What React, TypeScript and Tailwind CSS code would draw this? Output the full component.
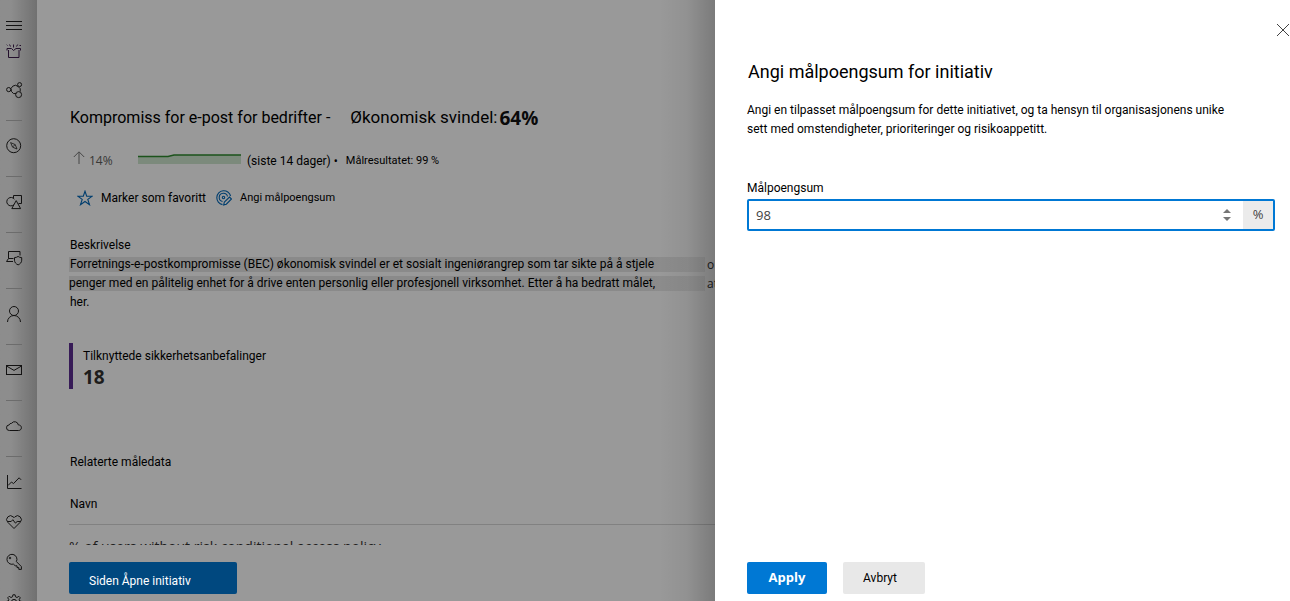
import { useState } from "react";
import type { ReactNode } from "react";

type NavItem = { label: string; icon: ReactNode; divider?: boolean };

const navItems: NavItem[] = [
  {
    label: "Deling",
    icon: (
      <>
        <circle cx="2.7" cy="7.6" r="2.1" />
        <path d="M12.2 4.6A4.2 4.2 0 1 0 10.4 11.6" />
        <path d="M12.2 4.6A4.2 4.2 0 0 1 14.2 9.6" />
        <circle cx="13.6" cy="2.6" r="2" />
        <circle cx="12.6" cy="12.6" r="3" />
      </>
    ),
    divider: true,
  },
  {
    label: "Utforsk",
    icon: (
      <>
        <circle cx="7.7" cy="7.7" r="7" />
        <path d="M4.6 4.6l4.6 2 1.8 4.4-4.4-1.8zM6.8 8.9l2.2-2.2" strokeWidth=".8" />
      </>
    ),
    divider: true,
  },
  {
    label: "Ressurser",
    icon: (
      <>
        <path d="M7.500 4.500v-3h8v8h-3" />
        <path d="M8.400 5.200a4.200 4.200 0 1 0-.6 5.600" />
        <path d="M10.200 6.600l4.400 8H5.800z" />
      </>
    ),
    divider: true,
  },
  {
    label: "Enheter",
    icon: (
      <>
        <path d="M2.500 8.500v-7h11.500v4M2.500 8.500h5M2.500 8.500l-2 3h6.500" />
        <path d="M8.500 7.600c1.500 0 2.600-.4 3.600-1.200 1 .8 2.100 1.200 3.600 1.200v2.600c0 2.200-1.400 3.700-3.600 4.700-2.200-1-3.600-2.500-3.600-4.700z" />
      </>
    ),
    divider: true,
  },
  {
    label: "Brukere",
    icon: (
      <>
        <circle cx="8" cy="5" r="4.500" />
        <path d="M1.500 16a6.500 6.500 0 0 1 13 0" />
      </>
    ),
    divider: true,
  },
  {
    label: "E-post",
    icon: (
      <>
        <rect x=".5" y="3.500" width="15" height="9" />
        <path d="M.8 4.200l7.200 4.200 7.200-4.200" />
      </>
    ),
    divider: true,
  },
  {
    label: "Skyapper",
    icon: (
      <path d="M3.400 12.500a2.800 2.800 0 0 1-.2-5.600 2.300 2.300 0 0 1 2.400-1.600 3.700 3.700 0 0 1 6.700 1.600c1.900 0 3.100 1.200 3.100 2.800s-1.200 2.800-2.800 2.800z" />
    ),
    divider: true,
  },
  {
    label: "Rapporter",
    icon: (
      <>
        <path d="M1.500 1v13.500h14" />
        <path d="M2 11.500l3.500-3.500 2 1.600 5.600-5.800 2 2" />
      </>
    ),
  },
  {
    label: "Tilstand",
    icon: (
      <>
        <path d="M8 14.500L1.800 8.300A3.800 3.800 0 0 1 7.200 2.900l.8.8.8-.8a3.800 3.800 0 0 1 5.400 5.400z" />
        <path d="M1.800 7.500h3.400l1.600-1.800 2.600 3.400 1.800-1.600h3" />
      </>
    ),
  },
  {
    label: "Tillatelser",
    icon: (
      <>
        <path d="M10.400 7.600l5 5v2.800h-2.600v-1.800H11v-1.800H9.200l-1.800-1.700A5 5 0 1 1 10.400 7.600z" />
        <circle cx="4" cy="4" r=".8" />
      </>
    ),
  },
  {
    label: "Innstillinger",
    icon: (
      <>
        <circle cx="8" cy="8" r="2.600" />
        <path d="M6.900.8h2.200l.4 2 1.500.7 1.800-1.200 1.500 1.500-1.100 1.800.6 1.400 2.100.5v2.200l-2.100.4-.6 1.500 1.100 1.800-1.500 1.500-1.800-1.200-1.500.7-.4 2H6.900l-.4-2-1.500-.7-1.800 1.200-1.500-1.500 1.100-1.800-.6-1.500-2-.4V7.500l2-.5.6-1.400-1.100-1.800 1.500-1.500L5 3.500l1.500-.7z" />
      </>
    ),
  },
];

const Icon = ({ children }: { children: ReactNode }) => (
  <svg
    viewBox="0 0 16 16"
    className="w-4 h-4 overflow-visible"
    fill="none"
    stroke="currentColor"
    strokeWidth="1"
    aria-hidden="true"
  >
    {children}
  </svg>
);

const Sidebar = () => (
  <nav className="w-[37px] shrink-0 overflow-hidden pt-3 pl-1.5 text-[#201f1e] bg-linear-to-r from-[#ebebeb] from-30% to-[#bcbcbc]">
    <button className="flex h-[26px] items-center" aria-label="Meny">
      <Icon>
        <path d="M0 4.500h16M0 8.500h16M0 12.500h16" />
      </Icon>
    </button>
    <a href="#" className="flex h-8 items-center pb-1.5 text-[#3b1a4a]" aria-label="Nyheter">
      <Icon>
        <path d="M2.500 7v7.500h10.500V7M1 7.500V5.500h4.500M10 5.500h4.500v2M5.500 5.500l2 2 2.500-2" />
        <path d="M7.500 4.500V1.500M4.500 3.500L3.500 1.500M10.500 3.500l1.200-2M1.500 2.500l-.8-.8M13.500 2.500h1.500" />
      </Icon>
    </a>
    {navItems.map((item) => (
      <div key={item.label}>
        <a href="#" className="flex h-10 items-center" aria-label={item.label}>
          <Icon>{item.icon}</Icon>
        </a>
        {item.divider && <div className="w-4 h-px mt-2.5 mb-[5px] bg-[#b4b4b4]" />}
      </div>
    ))}
  </nav>
);

const Initiative = () => (
  <main className="flex flex-1 min-w-0 flex-col bg-white pl-8">
    <div className="flex-1 min-h-0 overflow-hidden pt-[104px]">
      <h1 className="flex h-7 items-center whitespace-nowrap pl-px text-base">
        <span>Kompromiss for e-post for bedrifter -</span>
        <span className="ml-5 text-[17px]">Økonomisk svindel:</span>
        <b className="ml-0.5 font-['Open_Sans'] text-[19px] font-bold text-[#111]">64%</b>
      </h1>

      <div className="mt-4 flex h-[26px] items-center whitespace-nowrap pl-1">
        <svg viewBox="0 0 12 14" className="w-3 h-3.5 -mt-1.5" fill="none" stroke="#767676" aria-hidden="true">
          <path d="M6 13V1M.8 6L6 .8 11.200 6" />
        </svg>
        <span className="ml-1 w-[49px] font-['Open_Sans'] text-xs text-[#605e5c]">14%</span>
        <svg viewBox="0 0 103 10" className="w-[103px] h-2.5 -mt-1" aria-hidden="true">
          <path d="M0 3h30l6-2h67v9H0z" fill="#cfe6cf" />
          <path d="M0 2.500h30l6-1.500h67" fill="none" stroke="#2f8a2f" strokeWidth="1.500" />
        </svg>
        <span className="ml-1.5">(siste 14 dager) •</span>
        <span className="ml-2 text-[11px]">Målresultatet: 99 %</span>
      </div>

      <div className="mt-3.5 flex h-5 items-center whitespace-nowrap pl-2">
        <button className="flex items-center gap-2">
          <svg viewBox="0 0 16 16" className="w-4 h-4" fill="none" stroke="#0067b8" strokeWidth="1.100" aria-hidden="true">
            <path d="M8 1.200l1.700 5h5.500l-4.400 3.200 1.700 5.300L8 11.500l-4.500 3.200 1.700-5.300L.8 6.200h5.500z" />
          </svg>
          Marker som favoritt
        </button>
        <button className="ml-2.5 flex items-center gap-2 text-[11px]">
          <svg viewBox="0 0 16 16" className="w-4 h-4" fill="none" stroke="#0067b8" strokeWidth="1.100" aria-hidden="true">
            <path d="M14.600 6A7 7 0 1 0 6.500 14.600" />
            <path d="M11.500 6.500a4.200 4.200 0 1 0-5 5" />
            <circle cx="7.500" cy="7.500" r="1.200" />
            <path d="M8.300 12.200l5.200-5.200 2 2-5.200 5.200-2.600.7z" />
          </svg>
          Angi målpoengsum
        </button>
      </div>

      <section className="mt-7 whitespace-nowrap leading-[19px]">
        <h2 className="pl-px">Beskrivelse</h2>
        <p className="flex h-[19px] items-center">
          <span className="flex-1 min-w-0 pl-px leading-[15px] bg-linear-to-r from-[#e6e6e6] from-90% to-[#f0f0f0]">
            Forretnings-e-postkompromisse (BEC) økonomisk svindel er et sosialt ingeniørangrep som tar sikte på å stjele
          </span>
          <span className="w-2.5 overflow-hidden pl-0.5 leading-4 font-['Open_Sans'] text-[#323130]">o</span>
        </p>
        <p className="flex h-[19px] items-center">
          <span className="flex-1 min-w-0 leading-[15px] bg-linear-to-r from-[#e6e6e6] from-90% to-[#f0f0f0]">
            penger med en pålitelig enhet for å drive enten personlig eller profesjonell virksomhet. Etter å ha bedratt målet,
          </span>
          <span className="w-2.5 overflow-hidden pl-0.5 leading-4 font-['Open_Sans'] text-[#323130]">at</span>
        </p>
        <p className="pl-px">her.</p>
      </section>

      <section className="mt-[31px] h-[46px] border-l-4 border-[#5c2e91] pl-2.5 pt-1">
        <h3 className="leading-[18px]">Tilknyttede sikkerhetsanbefalinger</h3>
        <p className="font-['Open_Sans'] text-[19px] leading-6 font-bold text-[#323130]">18</p>
      </section>

      <h2 className="mt-[63px] pl-px leading-5">Relaterte måledata</h2>
      <table className="mt-[22px] w-full text-left">
        <thead>
          <tr className="border-b border-[#d8d8d8]">
            <th className="pb-2.5 pl-px font-normal leading-5">Navn</th>
          </tr>
        </thead>
        <tbody>
          <tr>
            <td className="pt-3 font-['Open_Sans'] text-sm leading-5 whitespace-nowrap text-[#323130]">
              % of users without risk conditional access policy
            </td>
          </tr>
        </tbody>
      </table>
    </div>
    <footer className="shrink-0 pt-[17px] pb-[7px]">
      <button className="h-8 w-[168px] rounded-xs bg-[#0078d4] pl-5 pt-1.5 text-left text-white">
        {/* the caption stays undimmed above the backdrop */}
        <span className="relative z-10">Siden Åpne initiativ</span>
      </button>
    </footer>
  </main>
);

const TargetPanel = () => {
  const [score, setScore] = useState(98);

  return (
    <aside className="flex w-[575px] shrink-0 flex-col bg-white">
      <div className="flex justify-end pt-6 pr-px">
        <button aria-label="Lukk">
          <svg viewBox="0 0 12 12" className="w-3 h-3" fill="none" stroke="#424242" aria-hidden="true">
            <path d="M0 0l12 12M12 0L0 12" />
          </svg>
        </button>
      </div>
      <div className="flex-1 pt-6 pl-8 pr-[15px]">
        <h2 className="pl-px text-lg leading-6">Angi målpoengsum for initiativ</h2>
        <p className="mt-[17px] max-w-[490px] leading-[19px]">
          Angi en tilpasset målpoengsum for dette initiativet, og ta hensyn til organisasjonens unike sett med
          omstendigheter, prioriteringer og risikoappetitt.
        </p>
        <label htmlFor="score" className="mt-[39px] block leading-[21px]">
          Målpoengsum
        </label>
        <div className="flex h-8 rounded-xs border-2 border-[#0078d4] font-['Open_Sans'] text-[#424242]">
          <input
            id="score"
            type="number"
            value={score}
            onChange={(e) => setScore(Number(e.target.value))}
            className="flex-1 min-w-0 pl-[7px] pt-0.5 text-[13px] outline-none [appearance:textfield]"
          />
          <div className="flex w-7 flex-col items-center justify-center gap-1 pr-1">
            <button onClick={() => setScore(score + 1)} aria-label="Øk">
              <svg viewBox="0 0 8 4" className="block w-2 h-1" fill="#767676">
                <path d="M4 0l4 4H0z" />
              </svg>
            </button>
            <button onClick={() => setScore(score - 1)} aria-label="Reduser">
              <svg viewBox="0 0 8 4" className="block w-2 h-1" fill="#767676">
                <path d="M0 0h8L4 4z" />
              </svg>
            </button>
          </div>
          <span className="flex w-[30px] items-center justify-center bg-[#ebebeb] text-[13px]">%</span>
        </div>
      </div>
      <footer className="flex gap-4 pl-8 pb-[7px]">
        <button className="h-8 w-20 rounded-xs bg-[#0078d4] font-['Open_Sans'] text-[13px] font-bold text-white">
          Apply
        </button>
        <button className="h-8 w-[82px] rounded-xs bg-[#e8e8e8] pr-2">Avbryt</button>
      </footer>
    </aside>
  );
};

const App = () => (
  <div className="flex h-screen overflow-hidden bg-white font-[Roboto,sans-serif] text-xs text-black">
    <div className="relative flex flex-1 min-w-0">
      <Sidebar />
      <Initiative />
      {/* dimmed backdrop with the drawer's shadow on its right edge */}
      <div className="pointer-events-none absolute inset-0 flex justify-end bg-black/40">
        <div className="w-14 bg-linear-to-r from-transparent via-black/5 to-black/20" />
      </div>
    </div>
    <TargetPanel />
  </div>
);

export default App;
